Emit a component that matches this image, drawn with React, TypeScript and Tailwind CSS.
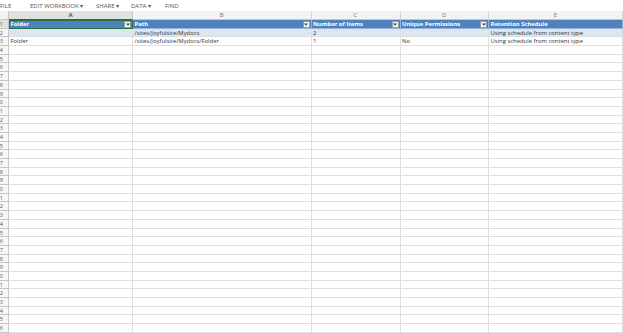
import React from "react";

const cols = ["A", "B", "C", "D", "E"];
const gridCols = "grid-cols-[9px_124px_178.5px_89px_88.5px_1fr]";

const headers = ["Folder", "Path", "Number of Items", "Unique Permissions", "Retention Schedule"];
const data: string[][] = [
  ["", "/sites/Joyfulsite/Mydocs", "2", "", "Using schedule from content type"],
  ["Folder", "/sites/Joyfulsite/Mydocs/Folder", "1", "No", "Using schedule from content type"],
];

function Drop() {
  return (
    <div className="absolute right-[1px] top-[0.5px] w-[7px] h-[7px] bg-[#f4f4f4] border border-[#9a9a9a] flex items-center justify-center">
      <svg width="4" height="3" viewBox="0 0 4 3">
        <path d="M0 0.5 L4 0.5 L2 2.8 Z" fill="#444" />
      </svg>
    </div>
  );
}

export default function App() {
  const rows = Array.from({ length: 36 }, (_, i) => i + 1);
  return (
    <div
      className="w-[623px] h-[333px] bg-white overflow-hidden text-[#333]"
      style={{ fontFamily: '"Open Sans", "Liberation Sans", sans-serif' }}
    >
      <div className="h-[11px] flex items-center text-[6px] text-[#555] leading-none">
        <span className="w-[30px]">FILE</span>
        <span className="w-[66px]">EDIT WORKBOOK ▾</span>
        <span className="w-[35px]">SHARE ▾</span>
        <span className="w-[34px]">DATA ▾</span>
        <span>FIND</span>
      </div>
      <div className={`grid ${gridCols} h-[9px] bg-[#f3f3f3] border-b border-[#c6c6c6]`}>
        <div className="border-r border-[#c6c6c6]" />
        {cols.map((c, i) => (
          <div
            key={c}
            className={
              i === 0
                ? "bg-[#e1e1e1] border-r border-[#c6c6c6] border-b border-b-[#217346] text-[#217346] font-bold text-[6px] leading-[8px] text-center"
                : "border-r border-[#d4d4d4] text-[#777] text-[6px] leading-[9px] text-center"
            }
          >
            {c}
          </div>
        ))}
      </div>
      {rows.map((r) => {
        const isHead = r === 1;
        const d = r === 2 ? data[0] : r === 3 ? data[1] : null;
        const rowBg = isHead ? "bg-[#4f81bd]" : r === 2 ? "bg-[#dce6f1]" : "bg-white";
        return (
          <div key={r} className={`grid ${gridCols} h-[8.7px]`}>
            <div
              className={`overflow-hidden whitespace-nowrap flex justify-end pr-[5px] text-[5.5px] leading-[8px] text-[#555] border-r border-b border-[#c6c6c6] ${
                isHead ? "bg-[#e1e1e1]" : "bg-[#f7f7f7]"
              }`}
            >
              <span>{r}</span>
            </div>
            {cols.map((c, i) => {
              const text = isHead ? headers[i] : d ? d[i] : "";
              const sel = isHead && i === 0;
              return (
                <div
                  key={c}
                  className={`relative whitespace-nowrap overflow-hidden pl-[1.5px] text-[5.9px] leading-[8px] ${rowBg} ${
                    isHead
                      ? "text-white font-bold border-r border-b border-[#95b3d7]"
                      : "border-r border-b border-[#dedede]"
                  } ${sel ? "outline outline-[1.5px] outline-[#217346] -outline-offset-1 z-10" : ""}`}
                >
                  {text}
                  {isHead && i < 4 && <Drop />}
                </div>
              );
            })}
          </div>
        );
      })}
    </div>
  );
}
